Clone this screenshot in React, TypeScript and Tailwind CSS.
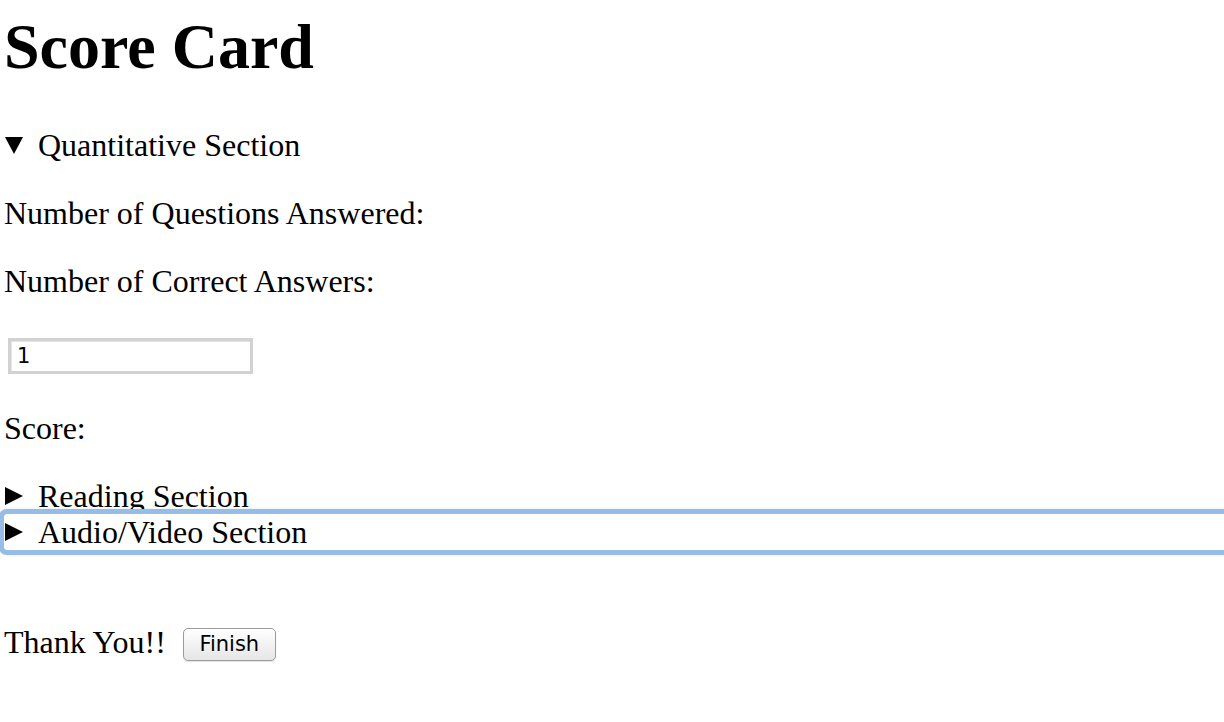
import React from 'react';

function Arrow({ open }: { open?: boolean }) {
  return open ? (
    <svg width="18" height="17" viewBox="0 0 18 17" className="ml-[1px] shrink-0">
      <polygon points="0,0 18,0 9,17" fill="#000" />
    </svg>
  ) : (
    <svg width="18" height="18" viewBox="0 0 18 18" className="ml-[1px] shrink-0">
      <polygon points="0,0 18,9 0,18" fill="#000" />
    </svg>
  );
}

function Summary({ label, open, focused }: { label: string; open?: boolean; focused?: boolean }) {
  return (
    <div
      className={
        focused
          ? 'flex items-center h-[36px] w-[1240px] outline-[5px] outline-solid outline-[#95bde6] rounded-[3px] shadow-[0_0_2px_5px_rgba(149,189,230,0.45)]'
          : 'flex items-center h-[36px]'
      }
    >
      <Arrow open={open} />
      <span className="ml-[15px]">{label}</span>
    </div>
  );
}

export default function App() {
  return (
    <div className="min-h-screen bg-white text-black overflow-hidden pl-[4px] font-['Liberation_Serif','Times_New_Roman',serif] text-[32px] leading-[36px]">
      <h1 className="mt-[10px] mb-[43px] text-[64px] leading-[74px] font-bold">Score Card</h1>

      <Summary label="Quantitative Section" open />
      <p className="mt-[32px]">Number of Questions Answered:</p>
      <p className="mt-[32px]">Number of Correct Answers:</p>
      <input
        type="text"
        defaultValue="1"
        className="block mt-[39px] ml-[4px] w-[245px] h-[36px] border-[3px] border-[#d2d2d2] shadow-[inset_1px_1px_0_#e4e4e4] pl-[6px] text-[21px] font-['DejaVu_Sans',sans-serif] text-black outline-none"
      />
      <p className="mt-[36px] mb-[32px]">Score:</p>

      <Summary label="Reading Section" />
      <Summary label="Audio/Video Section" focused />

      <div className="flex items-center h-[36px] mt-[74px]">
        <span>Thank You!!</span>
        <button className="ml-[17px] mt-[5px] w-[93px] h-[33px] rounded-[5px] border border-[#9c9c9c] bg-gradient-to-b from-white to-[#e6e6e6] shadow-[0_1px_1px_rgba(0,0,0,0.12)] text-[21px] leading-none font-['DejaVu_Sans',sans-serif] text-black">
          Finish
        </button>
      </div>
    </div>
  );
}
